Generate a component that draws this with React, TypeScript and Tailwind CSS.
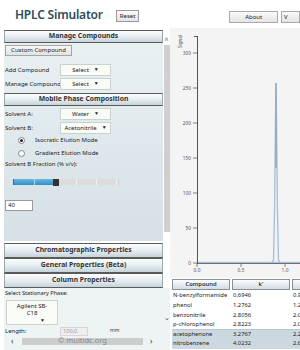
import React from "react";

const font = { fontFamily: '"Noto Sans", "Open Sans", sans-serif' };

function Header({ title, h = "h-[14px]" }: { title: string; h?: string }) {
  return (
    <div
      className={`${h} w-[159px] flex items-center justify-center border-y border-[#5a5a5a] border-x border-x-[#9aa] bg-gradient-to-b from-[#fcfdfd] via-[#e6edf1] to-[#c6d3db] text-[6.8px] font-bold text-[#333] whitespace-nowrap`}
    >
      {title}
    </div>
  );
}

function Select({ label, w = "w-[51px]" }: { label: string; w?: string }) {
  return (
    <div
      className={`${w} h-[12px] flex items-center justify-center gap-[5px] bg-[#f8fbf6] border border-[#c9d2cc] text-[6px] text-[#222] whitespace-nowrap`}
    >
      <span>{label}</span>
      <span className="text-[5px]">▼</span>
    </div>
  );
}

function Row({ label, sel }: { label: string; sel: string }) {
  return (
    <div className="flex items-center h-[12px] mt-[2px]">
      <div className="w-[56px] pl-[1px] text-[6px] text-[#222] whitespace-nowrap">{label}</div>
      <Select label={sel} />
    </div>
  );
}

function Radio({ on, label }: { on: boolean; label: string }) {
  return (
    <div className="flex items-center h-[13px] pl-[14px]">
      <div className="w-[7px] h-[7px] rounded-full border border-[#888] bg-white flex items-center justify-center">
        {on && <div className="w-[3px] h-[3px] rounded-full bg-[#222]" />}
      </div>
      <span className="ml-[10px] text-[6px] text-[#222] whitespace-nowrap">{label}</span>
    </div>
  );
}

function Chart() {
  const yt = [
    [300, 25],
    [250, 60],
    [200, 95],
    [150, 130],
    [100, 165],
    [50, 200],
    [0, 235],
  ];
  const xt = [
    ["0.0", 27],
    ["0.5", 71],
    ["1.0", 115],
  ];
  return (
    <svg width="130" height="250" viewBox="0 0 130 250" className="block">
      <rect x="0" y="0" width="130" height="250" fill="#f4f4f4" />
      <text
        x="0"
        y="0"
        fontSize="4.5"
        fill="#555"
        transform="translate(12 20) rotate(-90)"
        fontFamily="Noto Sans, sans-serif"
      >
        Signal
      </text>
      <line x1="24" y1="8.5" x2="27.5" y2="8.5" stroke="#555" strokeWidth="1" />
      <line x1="27.5" y1="8" x2="27.5" y2="235" stroke="#555" strokeWidth="1" />
      {yt.map(([v, y]) => (
        <g key={v}>
          <line x1="23" y1={y} x2="27" y2={y} stroke="#666" strokeWidth="0.8" />
          <text x="21" y={y + 1.6} fontSize="4.8" fill="#555" textAnchor="end" fontFamily="Noto Sans, sans-serif">
            {v}
          </text>
        </g>
      ))}
      <line x1="27" y1="235.5" x2="130" y2="235.5" stroke="#555" strokeWidth="1" />
      {xt.map(([l, x]) => (
        <g key={l}>
          <line x1={x} y1="235" x2={x} y2="239" stroke="#666" strokeWidth="0.8" />
          <text x={x} y="243.5" fontSize="4.8" fill="#555" textAnchor="middle" fontFamily="Noto Sans, sans-serif">
            {l}
          </text>
        </g>
      ))}
      <line x1="28" y1="234.5" x2="130" y2="234.5" stroke="#a9c2d8" strokeWidth="1.6" />
      <path
        d="M102 234.5 L103.5 232 L104.6 180 L105.4 100 L106 55 L106.6 100 L107.4 180 L108.5 232 L110 234.5"
        fill="none"
        stroke="#a9c2d8"
        strokeWidth="1.4"
      />
      <path d="M105.5 140 L106 55 L106.5 140" fill="none" stroke="#7f9cb6" strokeWidth="0.6" />
    </svg>
  );
}

const rows: [string, string, string][] = [
  ["N-benzylformamide", "0.6946", "0.90"],
  ["phenol", "1.2762", "1.21"],
  ["benzonitrile", "2.8056", "2.02"],
  ["p-chlorophenol", "2.8223", "2.03"],
  ["acetophenone", "3.2767", "2.27"],
  ["nitrobenzene", "4.0232", "2.63"],
];

function Table() {
  return (
    <div className="pl-[2px] pt-[1px] bg-white">
      <div className="flex h-[11px] gap-[2px]">
        <div className="w-[58px] shrink-0 flex items-center justify-center border border-[#8a9096] bg-gradient-to-b from-[#fbfcfd] to-[#d3dde4] text-[5.8px] font-semibold text-[#333]">
          Compound
        </div>
        <div className="w-[58px] shrink-0 flex items-center justify-center border border-[#8a9096] bg-gradient-to-b from-[#fbfcfd] to-[#d3dde4] text-[5.8px] font-semibold text-[#333]">
          k'
        </div>
        <div className="w-[40px] shrink-0 border border-[#8a9096] bg-gradient-to-b from-[#fbfcfd] to-[#d3dde4]" />
      </div>
      <div className="mt-[1px]">
        {rows.map(([c, k, t], i) => (
          <div
            key={c}
            className={`flex h-[9.6px] items-center text-[5.8px] text-[#222] ${i >= 4 ? "bg-[#ccd8e0]" : ""} ${i === 4 ? "border-t border-[#b8c6d0]" : ""}`}
          >
            <div className="w-[60px] shrink-0 pl-[1px] whitespace-nowrap">{c}</div>
            <div className="w-[60px] shrink-0 pl-[1px]">{k}</div>
            <div className="w-[14px] shrink-0 pl-[1px] overflow-hidden whitespace-nowrap">{t}</div>
          </div>
        ))}
      </div>
    </div>
  );
}

export default function App() {
  return (
    <div className="w-[300px] h-[350px] overflow-hidden bg-white relative" style={font}>
      {/* top bar */}
      <div className="h-[28px] flex items-start">
        <div className="w-[123px] pl-[15px] pt-[6px] text-[12px] font-semibold leading-[18px] tracking-[-0.2px] text-[#2d4c5a] whitespace-nowrap">
          HPLC Simulator
        </div>
        <div className="mt-[10px] w-[25px] h-[12px] flex items-center justify-center border border-[#999] bg-gradient-to-b from-[#fafafa] to-[#e4e4e4] text-[6px] text-[#222]">
          Reset
        </div>
        <div className="ml-[90px] mt-[11px] w-[52px] h-[12px] flex items-center justify-center border border-[#aaa] bg-gradient-to-b from-[#fafafa] to-[#e4e4e4] text-[6px] text-[#222]">
          About
        </div>
        <div className="ml-[3px] mt-[11px] w-[20px] h-[12px] flex items-center pl-[2px] border border-[#aaa] bg-gradient-to-b from-[#fafafa] to-[#e4e4e4] text-[6px] text-[#222]">
          V
        </div>
      </div>

      <div className="flex h-[322px]">
        {/* left column */}
        <div className="w-[170px] pl-[4px] pt-[2px] flex flex-col">
          <div className="flex h-[211px]">
            <div className="w-[159px] bg-gradient-to-b from-[#eaf1f3] to-[#d5e1e6] flex flex-col">
              <Header title="Manage Compounds" h="h-[13px]" />
              <div className="mt-[2px] ml-[1px] w-[67px] h-[11px] flex items-center justify-center border border-[#a5a5a5] bg-gradient-to-b from-[#f7f7f7] to-[#e2e2e2] text-[6px] text-[#222] whitespace-nowrap">
                Custom Compound
              </div>
              <div className="h-[6px]" />
              <Row label="Add Compound" sel="Select" />
              <Row label="Manage Compound" sel="Select" />
              <div className="mt-[3px]">
                <Header title="Mobile Phase Composition" h="h-[13px]" />
              </div>
              <Row label="Solvent A:" sel="Water" />
              <Row label="Solvent B:" sel="Acetonitrile" />
              <Radio on label="Isocratic Elution Mode" />
              <Radio on={false} label="Gradient Elution Mode" />
              <div className="h-[8px] flex items-center pl-[1px] text-[6px] text-[#222] whitespace-nowrap">
                Solvent B Fraction (% v/v):
              </div>
              <div className="mt-[11px] ml-[9px] flex h-[6px] w-[107px]">
                <div className="w-[1px] bg-[#2a6f99]" />
                <div className="w-[20px] bg-gradient-to-b from-[#6cb8e0] to-[#2b8fc7]" />
                <div className="w-[1px] bg-[#a8d6ee]" />
                <div className="w-[18px] bg-gradient-to-b from-[#6cb8e0] to-[#2b8fc7]" />
                <div className="w-[6px] bg-[#333] -my-[0.5px]" />
                <div className="w-[18px] bg-[#dcdcdc]" />
                <div className="w-[1px] bg-[#f2f2f2]" />
                <div className="w-[19px] bg-[#dcdcdc]" />
                <div className="w-[1px] bg-[#f2f2f2]" />
                <div className="w-[19px] bg-[#dcdcdc]" />
                <div className="w-[1px] bg-[#f2f2f2]" />
                <div className="w-[3px] bg-[#dcdcdc]" />
              </div>
              <div className="mt-[15px] ml-[1px] w-[28px] h-[11px] flex items-center pl-[2px] bg-white border border-[#9a9a9a] text-[6px] text-[#222]">
                40
              </div>
            </div>
            <div className="w-[7px] flex flex-col">
              <div className="h-[15px] flex items-center justify-center text-[7px] text-[#444] leading-none pt-[5px]">
                ^
              </div>
              <div className="h-[187px] bg-[#cfcfcf] ml-[1px] w-[6px]" />
            </div>
          </div>
          <div className="mt-[2px] flex flex-col">
            <Header title="Chromatographic Properties" h="h-[15px]" />
            <Header title="General Properties (Beta)" h="h-[15px]" />
            <Header title="Column Properties" h="h-[15px]" />
          </div>
          <div className="flex flex-1 bg-[#eef3f4] w-[166px] relative">
            <div className="w-[159px] flex flex-col">
              <div className="pl-[1px] pt-[1px] h-[10px] text-[5.6px] text-[#222] whitespace-nowrap">Select Stationary Phase:</div>
              <div className="ml-[2px] mt-[2px] w-[52px] h-[25px] bg-[#f8fbf6] border border-[#c9d2cc] flex flex-col items-center text-[6px] leading-[7px] text-[#222] pt-[2px]">
                <span>Agilent SB-</span>
                <span>C18</span>
                <span className="self-end mr-[12px] text-[5px] leading-[6px]">▼</span>
              </div>
              <div className="flex items-center h-[10px] mt-[1px]">
                <span className="w-[56px] pl-[1px] text-[6px] text-[#222]">Length:</span>
                <div className="w-[28px] h-[9px] bg-[#eeeeee] border border-[#d6d6d6] text-[5.6px] text-[#999] flex items-center pl-[2px]">
                  100.0
                </div>
                <span className="ml-[22px] text-[5px] text-[#333]">mm</span>
              </div>
              <div className="flex items-center h-[10px]">
                <span className="w-[18px] pl-[7px] text-[8px] text-[#333] leading-none">‹</span>
                <div className="w-[121px] h-[7px] bg-[#cdcdcd] flex items-center justify-center text-[7.5px] leading-none text-[#888] whitespace-nowrap">
                  © multidc.org
                </div>
                <span className="pl-[7px] text-[8px] text-[#333] leading-none">›</span>
              </div>
            </div>
            <div className="absolute left-[160px] top-[25px] text-[7px] text-[#444]">⌄</div>
          </div>
        </div>

        {/* right column */}
        <div className="flex-1 flex flex-col bg-white">
          <div className="pl-[0px]">
            <Chart />
          </div>
          <Table />
        </div>
      </div>
    </div>
  );
}
